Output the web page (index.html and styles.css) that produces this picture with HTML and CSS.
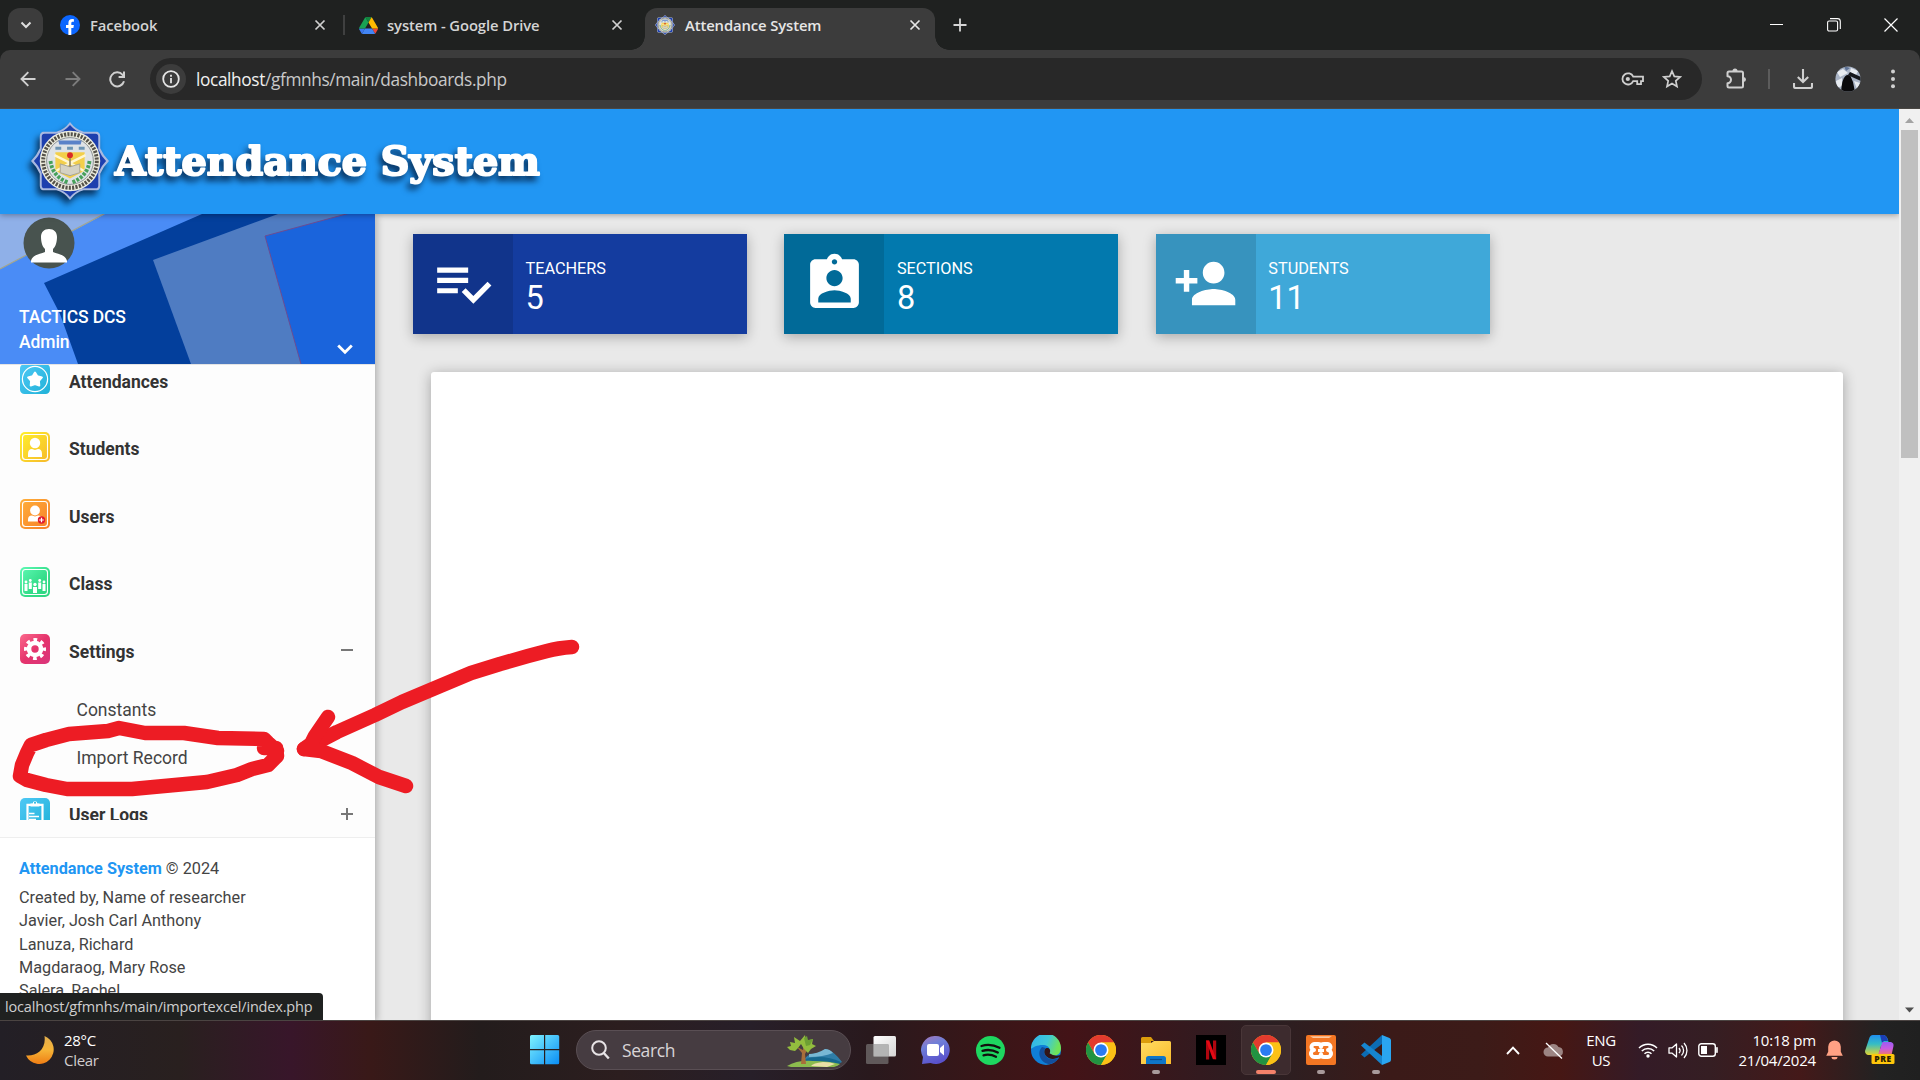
FILE: index.html
```html
<!DOCTYPE html>
<html lang="en">
<head>
<meta charset="utf-8">
<title>Attendance System</title>
<link rel="stylesheet" href="styles.css">
</head>
<body>
<svg class="defs" width="0" height="0" aria-hidden="true">
  <defs>
    <linearGradient id="win" x1="0" y1="0" x2="1" y2="1"><stop offset="0" stop-color="#7ff3ff"/><stop offset="1" stop-color="#0a8df5"/></linearGradient>
    <linearGradient id="moon" x1="0" y1="0" x2="0" y2="1"><stop offset="0" stop-color="#e2ae4e"/><stop offset=".5" stop-color="#f6b437"/><stop offset="1" stop-color="#ef7d14"/></linearGradient>
    <linearGradient id="blue" x1="0" y1="0" x2="1" y2="1"><stop offset="0" stop-color="#4fc8f5"/><stop offset="1" stop-color="#1fb2d8"/></linearGradient>
    <linearGradient id="yellow" x1="0" y1="0" x2="1" y2="1"><stop offset="0" stop-color="#fff02a"/><stop offset="1" stop-color="#f6b92c"/></linearGradient>
    <linearGradient id="orange" x1="0" y1="0" x2="1" y2="1"><stop offset="0" stop-color="#ffb03a"/><stop offset="1" stop-color="#f77f28"/></linearGradient>
    <linearGradient id="green" x1="0" y1="0" x2="1" y2="1"><stop offset="0" stop-color="#5ffab5"/><stop offset=".6" stop-color="#33dc88"/><stop offset="1" stop-color="#2fd580"/></linearGradient>
    <linearGradient id="pink" x1="0" y1="0" x2="1" y2="1"><stop offset="0" stop-color="#fb6a8c"/><stop offset=".5" stop-color="#e5346c"/><stop offset="1" stop-color="#d9357c"/></linearGradient>
    <linearGradient id="chat" x1="0" y1="0" x2=".4" y2="1"><stop offset="0" stop-color="#a877b8"/><stop offset=".4" stop-color="#6f7fd8"/><stop offset="1" stop-color="#5a52cc"/></linearGradient>
    <linearGradient id="edge1" x1="0" y1="0" x2="1" y2=".3"><stop offset="0" stop-color="#2fb4ec"/><stop offset=".6" stop-color="#3fc8d8"/><stop offset="1" stop-color="#6fe25a"/></linearGradient>
    <linearGradient id="folder" x1="0" y1="0" x2="1" y2="1"><stop offset="0" stop-color="#ffdc62"/><stop offset="1" stop-color="#fbbc2c"/></linearGradient>
    <linearGradient id="cop1" x1="0" y1="0" x2="0" y2="1"><stop offset="0" stop-color="#1f8ff0"/><stop offset=".45" stop-color="#35bdc4"/><stop offset="1" stop-color="#e2d42e"/></linearGradient>
    <linearGradient id="cop2" x1="0" y1="0" x2="0" y2="1"><stop offset="0" stop-color="#9a5cf4"/><stop offset=".5" stop-color="#c95be0"/><stop offset="1" stop-color="#f3786a"/></linearGradient>
    <linearGradient id="tv" x1="0" y1="0" x2="1" y2="1"><stop offset="0" stop-color="#ffffff"/><stop offset="1" stop-color="#d5d5d5"/></linearGradient>
  </defs>
  <symbol id="i-x" viewBox="0 0 12 12"><path d="M1.500 1.500l9 9M10.500 1.500l-9 9" fill="none" stroke="currentColor" stroke-width="1.700"/></symbol>
  <symbol id="i-chrome" viewBox="0 0 48 48">
    <circle cx="24" cy="24" r="24" fill="#fbc116"/>
    <path d="M3.200 12A24 24 0 0 1 44.800 12H24L13.600 30z" fill="#e33b2e"/>
    <path d="M3.200 12A24 24 0 0 0 24 48L34.400 30 24 24 13.600 30z" fill="#229342"/>
    <path d="M24 12h20.800A24 24 0 0 1 24 48l10.400-18z" fill="#fbc116"/>
    <circle cx="24" cy="24" r="12" fill="#fff"/><circle cx="24" cy="24" r="9.400" fill="#2a7bf2"/>
  </symbol>
  <symbol id="i-seal" viewBox="0 0 80 80">
    <path d="M40 0Q46 8 54 10H68Q71 11 71 15V27Q74 34 80 40 74 46 71 53V65Q71 69 68 70H54Q46 72 40 80 34 72 26 70H12Q9 69 9 65V53Q6 46 0 40 6 34 9 27V15Q9 11 12 10H26Q34 8 40 0z" fill="#a9b9e0"/>
    <path d="M40 3Q46 10 54 12H66Q69 12 69 15V28Q72 35 77 40 72 45 69 52V65Q69 68 66 68H54Q46 70 40 77 34 70 26 68H14Q11 68 11 65V52Q8 45 3 40 8 35 11 28V15Q11 12 14 12H26Q34 10 40 3z" fill="#1d3fae"/>
    <circle cx="40" cy="40" r="31" fill="#ededdf"/>
    <circle cx="40" cy="40" r="27.500" fill="none" stroke="#55524a" stroke-width="4" stroke-dasharray="2.200 1.300"/>
    <circle cx="40" cy="40" r="24" fill="#dfe3e6" stroke="#8c9194" stroke-width="1"/>
    <path d="M28 19h24l-1 4H29z" fill="#5b82c8"/>
    <path d="M25 31h30v19L40 58 25 50z" fill="#f3cf4a"/>
    <path d="M40 42L24 34M40 42l-14 8M40 42l16-8M40 42l14 8" stroke="#fff6cf" stroke-width="2.500"/>
    <path d="M25 27h6M37 27h6M49 27h6" stroke="#6d95b4" stroke-width="3"/>
    <path d="M20 40q2 16 18 22M60 40q-2 16-18 22" fill="none" stroke="#46a05a" stroke-width="4" stroke-dasharray="3 1.400"/>
    <path d="M30 43l10 3 10-3v9l-10 3-10-3z" fill="#d5d2c4" stroke="#a6a498" stroke-width="1"/>
    <path d="M39.200 36h1.600v10h-1.600z" fill="#8c8060"/><circle cx="40" cy="34" r="3" fill="#d92b26"/>
  </symbol>
</svg>

<div class="tabstrip">
  <div class="tab-search"><svg width="12" height="8" viewBox="0 0 12 8"><path d="M1.500 1.500L6 6l4.500-4.500" fill="none" stroke="#dedede" stroke-width="2"/></svg></div>
  <div class="tab tab-first">
    <svg class="fav" width="20" height="20" viewBox="0 0 20 20"><circle cx="10" cy="10" r="10" fill="#0b66ff"/><path d="M8.400 20v-7H6V10h2.400V8.200C8.400 5.300 9.800 4 12.200 4c.7 0 1.300.1 1.700.2v2.600h-1.200c-1 0-1.400.5-1.400 1.500V10h2.600l-.5 3h-2.100v7z" fill="#fff"/></svg>
    <span class="tab-title t-fb">Facebook</span>
    <svg class="tab-x" width="12" height="12"><use href="#i-x"/></svg>
  </div>
  <div class="tab tab-second">
    <svg class="fav" width="19" height="17" viewBox="0 0 87 78"><path d="M6.600 66.900l3.800 6.600c.8 1.400 2 2.500 3.300 3.300L27.500 53H0c0 1.500.4 3.100 1.200 4.500z" fill="#3b77f0"/><path d="M43.600 25L29.900 1.200c-1.300.8-2.500 1.900-3.300 3.300L1.200 48.500C.4 49.900 0 51.500 0 53h27.500z" fill="#18a253"/><path d="M73.500 76.800c1.300-.8 2.500-1.900 3.300-3.300l9.300-16c.8-1.400 1.200-3 1.200-4.500H59.800z" fill="#e8453a"/><path d="M43.600 25L57.400 1.200C56.100.4 54.500 0 52.900 0H34.400c-1.600 0-3.200.4-4.500 1.200z" fill="#12843f"/><path d="M59.800 53H27.500L13.700 76.800c1.300.8 2.900 1.200 4.500 1.200h50.800c1.600 0 3.200-.4 4.500-1.200z" fill="#4285f4"/><path d="M73.400 26.500L60.700 4.500c-.8-1.400-1.900-2.500-3.300-3.300L43.600 25l16.200 28h27.400c0-1.500-.4-3.100-1.200-4.500z" fill="#ffba00"/></svg>
    <span class="tab-title t-gd">system - Google Drive</span>
    <svg class="tab-x" width="12" height="12"><use href="#i-x"/></svg>
  </div>
  <div class="tab tab-active">
    <svg class="fav" width="20" height="20"><use href="#i-seal"/></svg>
    <span class="tab-title t-as">Attendance System</span>
    <svg class="tab-x" width="12" height="12"><use href="#i-x"/></svg>
  </div>
  <div class="newtab"><svg width="14" height="14" viewBox="0 0 14 14"><path d="M7 .5v13M.5 7h13" stroke="#d5d5d5" stroke-width="1.800"/></svg></div>
  <div class="winbtns">
    <svg width="14" height="14" viewBox="0 0 14 14"><path d="M0 6.500h13" stroke="#fff"/></svg>
    <svg width="14" height="14" viewBox="0 0 14 14"><rect x=".6" y="3" width="10" height="10" rx="1.500" fill="none" stroke="#fff" stroke-width="1.100"/><path d="M3 .6h7.500a2.800 2.800 0 0 1 2.800 2.800V11" fill="none" stroke="#fff" stroke-width="1.100"/></svg>
    <svg width="14" height="14" viewBox="0 0 14 14"><path d="M.5.5l13 13M13.500.5l-13 13" stroke="#fff" stroke-width="1.200"/></svg>
  </div>
</div>

<div class="toolbar-bg">
<div class="toolbar">
  <div class="tbtn"><svg width="16" height="16" viewBox="0 0 16 16"><path d="M15.500 8H1.800M8.300 1.200L1.500 8l6.800 6.800" fill="none" stroke="#d0d0d0" stroke-width="1.900"/></svg></div>
  <div class="tbtn"><svg width="16" height="16" viewBox="0 0 16 16"><path d="M.5 8h13.700M7.700 1.200L14.500 8l-6.800 6.800" fill="none" stroke="#7c7c7c" stroke-width="1.900"/></svg></div>
  <div class="tbtn"><svg width="17" height="17" viewBox="0 0 17 17"><path d="M15 10.300A7 7 0 1 1 13.600 3.800L15 5.400" fill="none" stroke="#d0d0d0" stroke-width="2"/><path d="M16 .6v6.400H9.600V5H14V.6z" fill="#d0d0d0"/></svg></div>
  <div class="omnibox">
    <div class="info"><svg width="18" height="18" viewBox="0 0 18 18"><circle cx="9" cy="9" r="7.800" fill="none" stroke="#e6e6e6" stroke-width="1.800"/><path d="M9 8v5.200M9 4.800v1.900" stroke="#e6e6e6" stroke-width="1.800"/></svg></div>
    <span class="url"><span class="host">localhost</span>/gfmnhs/main/dashboards.php</span>
    <svg class="key" width="23" height="14" viewBox="0 0 23 14"><path d="M12.200 4.700H22v4.400h-2v3h-3.800v-3h-4a5.600 5.600 0 1 1 0-4.400z" fill="none" stroke="#cfcfcf" stroke-width="1.800"/><circle cx="6.800" cy="7" r="2.100" fill="#cfcfcf"/></svg>
    <svg class="star" width="20" height="20" viewBox="0 0 20 20"><path d="M10 2.200l2.300 5.200 5.800.6-4.300 3.900 1.200 5.600-5-2.900-5 2.900 1.200-5.600L1.900 8l5.800-.6z" fill="none" stroke="#cfcfcf" stroke-width="1.700"/></svg>
  </div>
  <div class="tbtn ext"><svg width="22" height="22" viewBox="0 0 22 22"><path d="M4 3.500H16.500a1.500 1.500 0 0 1 1.500 1.500V18a1.500 1.500 0 0 1-1.500 1.500H4A1.500 1.500 0 0 1 2.500 18v-2.800a3.500 3.500 0 0 0 0-7V5A1.500 1.500 0 0 1 4 3.500z" fill="none" stroke="#cfcfcf" stroke-width="2" stroke-linejoin="round"/><path d="M7.500 3a2.500 2.500 0 0 1 5 0zM18.500 9a2.500 2.500 0 0 1 0 5z" fill="#cfcfcf"/></svg></div>
  <div class="tsep"></div>
  <div class="tbtn dl"><svg width="20" height="20" viewBox="0 0 20 20"><path d="M10 0v12.500M4.800 8l5.200 5 5.200-5M1 14v3.500a1.500 1.500 0 0 0 1.500 1.500h15a1.500 1.500 0 0 0 1.500-1.500V14" fill="none" stroke="#cfcfcf" stroke-width="2.100"/></svg></div>
  <div class="tbtn av"><svg width="26" height="26" viewBox="0 0 26 26"><defs><clipPath id="avc"><circle cx="13" cy="13" r="12.600"/></clipPath></defs><g clip-path="url(#avc)"><path d="M0 0h26v26H0z" fill="#a9b4c6"/><path d="M2 6l6-3 5 4-8 4zM16 2l7 3-2 4-6-3zM1 15l6-3v8l-5 2zM19 15l6 2-3 6z" fill="#e8ecf1"/><path d="M9 0l6 2-4 3z" fill="#5f7396"/><path d="M6 26q1-13 4-15.500 2.500-2.500 5.500-.5L18 16l2 10z" fill="#0a0a0c"/><path d="M13 9l2-3 11 5v4l-9-4z" fill="#15171c"/></g></svg></div>
  <div class="tbtn dots"><svg width="6" height="20" viewBox="0 0 6 20"><g fill="#d0d0d0"><circle cx="3" cy="2.500" r="2"/><circle cx="3" cy="9.900" r="2"/><circle cx="3" cy="17.300" r="2"/></g></svg></div>
</div>
</div>

<div class="viewport">
  <div class="page">
    <header class="navbar">
      <svg width="550" height="105" viewBox="0 0 550 105"><g class="brand-shadow"><use href="#i-seal" x="31" y="13" width="78" height="78"/><text class="brand-text" x="115" y="65.500" textLength="425" lengthAdjust="spacingAndGlyphs">Attendance System</text></g></svg>
    </header>
    <div class="content">
      <aside class="sidebar">
        <div class="profile">
          <svg class="profile-bg" width="375" height="150" viewBox="0 0 375 150">
            <path d="M0 0h375v150H0z" fill="#4a8cf6"/>
            <path d="M0 0H105L0 55z" fill="#8fb0e8"/><path d="M104 0L0 55" stroke="#a3a68f" stroke-width="1.200"/>
            <path d="M202 0L44 69 60 100 78 150H375V0z" fill="#033f9c"/>
            <path d="M278 0L153 46 191 150H375V0z" fill="#4f7cc2"/>
            <path d="M350-1L265 22 301 150H375V-2z" fill="#1a64dc"/><path d="M350-1L265 22l36 128" fill="none" stroke="#6c4c92" stroke-width="1"/>
            <circle cx="49" cy="29" r="25.500" fill="#48534f"/>
            <path d="M49 15c5 0 8 3 8 8 0 5-1.500 10-4 12v3c5 2 13 3 14 9v1.500H31V47c1-6 9-7 14-9v-3c-2.500-2-4-7-4-12 0-5 3-8 8-8z" fill="#fff"/>
          </svg>
          <div class="profile-text"><span>TACTICS DCS</span><span>Admin</span></div>
          <svg class="profile-caret" width="16" height="11" viewBox="0 0 16 11"><path d="M1.200 1.500L8 8.200l6.800-6.700" fill="none" stroke="#fff" stroke-width="2.800"/></svg>
        </div>
        <nav class="menu">
          <div class="item first"><svg width="30" height="30" viewBox="0 0 30 30"><rect width="30" height="30" rx="4.500" fill="url(#blue)"/><circle cx="15" cy="15" r="12.600" fill="none" stroke="#fff" stroke-width="1.200"/><path d="M15 8.500l2.300 3.800 4.600 1.100-3 3.500.4 4.600-4.300-1.500-4.300 1.500.4-4.600-3-3.500 4.600-1.100z" fill="#fff" stroke="#fff" stroke-width="2" stroke-linejoin="round"/></svg><span class="m-att">Attendances</span></div>
          <div class="item"><svg width="30" height="30" viewBox="0 0 30 30"><rect width="30" height="30" rx="5" fill="url(#yellow)"/><rect x="2.500" y="2.500" width="25" height="25" rx="3" fill="none" stroke="#fff" stroke-width="1.100"/><circle cx="15" cy="11" r="5.200" fill="#fff"/><path d="M8 25v-3q0-5 4-5l3 1 3-1q4 0 4 5v3z" fill="#fff"/></svg><span>Students</span></div>
          <div class="item"><svg width="30" height="30" viewBox="0 0 30 30"><rect width="30" height="30" rx="5" fill="url(#orange)"/><rect x="2.500" y="2.500" width="25" height="25" rx="3" fill="none" stroke="#fff" stroke-width="1.100"/><circle cx="15" cy="11.500" r="4.900" fill="#fff"/><path d="M8 22.500v-2q0-4 4-4l3 1 3-1q4 0 4 4v2z" fill="#fff"/><circle cx="21.500" cy="21" r="3.700" fill="#e01a2c"/><path d="M21.500 18.700v4.600M19.200 21h4.600" stroke="#fff" stroke-width="1.200"/></svg><span>Users</span></div>
          <div class="item"><svg width="30" height="30" viewBox="0 0 30 30"><rect width="30" height="30" rx="5" fill="url(#green)"/><rect x="2.500" y="2.500" width="25" height="25" rx="3" fill="none" stroke="#fff" stroke-width="1.100"/><g fill="#fff"><circle cx="6" cy="15" r="1.400"/><circle cx="10.300" cy="13.500" r="1.400"/><circle cx="15" cy="17.500" r="1.700"/><circle cx="19.700" cy="13.500" r="1.400"/><circle cx="24" cy="15" r="1.400"/><path d="M4.500 17h3v7h-3zM8.800 15.500h3V22h-3zM13 20h4v6h-4zM18.200 15.500h3V22h-3zM22.500 17h3v7h-3z"/></g></svg><span>Class</span></div>
          <div class="item"><svg width="30" height="30" viewBox="0 0 30 30"><rect width="30" height="30" rx="5" fill="url(#pink)"/><circle cx="15" cy="15" r="6" fill="none" stroke="#fff" stroke-width="4.600"/><circle cx="15" cy="15" r="9" fill="none" stroke="#fff" stroke-width="4" stroke-dasharray="3.600 3.470" stroke-dashoffset="1.800"/></svg><span>Settings</span><i class="toggle minus"></i></div>
          <div class="sub">Constants</div>
          <div class="sub">Import Record</div>
          <div class="item"><svg width="30" height="30" viewBox="0 0 30 30"><rect width="30" height="30" rx="5" fill="url(#blue)"/><path d="M7.500 6.800h15V30h-15z" fill="none" stroke="#fff" stroke-width="2.200"/><path d="M10.500 5.500h2.200a2.300 2.300 0 0 1 4.600 0h2.200v3h-9z" fill="#fff"/><circle cx="15" cy="4.800" r="1" fill="#24b5de"/><path d="M9 15.500h5.500M9 18.500h10M9 21.500h7" stroke="#fff" stroke-width="1.600"/></svg><span>User Logs</span><i class="toggle plus"></i></div>
        </nav>
        <div class="legal">
          <p class="copy"><b>Attendance System</b> © 2024</p>
          <p class="l1">Created by, Name of researcher</p>
          <p>Javier, Josh Carl Anthony</p>
          <p>Lanuza, Richard</p>
          <p>Magdaraog, Mary Rose</p>
          <p>Salera, Rachel</p>
        </div>
      </aside>
      <main class="main">
        <div class="cards">
          <div class="card c1"><div class="cicon"><svg width="62" height="62" viewBox="0 0 24 24" fill="#fff"><path d="M14 10H2v2h12v-2zm0-4H2v2h12V6zM2 16h8v-2H2v2zm19.500-4.500L23 13l-6.990 7-4.510-4.500L13 14l3.010 3 5.490-5.500z"/></svg></div><div class="ctext"><span>TEACHERS</span><b>5</b></div></div>
          <div class="card c2"><div class="cicon"><svg width="65" height="65" viewBox="0 0 24 24" fill="#fff"><path d="M19 3h-4.180C14.400 1.840 13.300 1 12 1c-1.300 0-2.400.84-2.820 2H5c-1.100 0-2 .9-2 2v14c0 1.100.9 2 2 2h14c1.100 0 2-.9 2-2V5c0-1.100-.9-2-2-2zm-7 0c.55 0 1 .45 1 1s-.45 1-1 1-1-.45-1-1 .45-1 1-1zm0 4c1.660 0 3 1.340 3 3s-1.340 3-3 3-3-1.340-3-3 1.340-3 3-3zm6 12H6v-1.400c0-2 4-3.100 6-3.100s6 1.100 6 3.100V19z"/></svg></div><div class="ctext"><span>SECTIONS</span><b>8</b></div></div>
          <div class="card c3"><div class="cicon"><svg width="65" height="65" viewBox="0 0 24 24" fill="#fff"><path d="M15 12c2.210 0 4-1.790 4-4s-1.790-4-4-4-4 1.790-4 4 1.790 4 4 4zm-9-2V7H4v3H1v2h3v3h2v-3h3v-2H6zm9 4c-2.670 0-8 1.340-8 4v2h16v-2c0-2.660-5.330-4-8-4z"/></svg></div><div class="ctext"><span>STUDENTS</span><b>11</b></div></div>
        </div>
        <div class="panel"></div>
      </main>
    </div>
    <div class="status">localhost/gfmnhs/main/importexcel/index.php</div>
  </div>
  <div class="scroll">
    <svg width="21" height="21" viewBox="0 0 21 21"><path d="M6 14l4.500-5 4.500 5z" fill="#a3a3a3"/></svg>
    <div class="thumb"></div>
    <svg class="down" width="21" height="21" viewBox="0 0 21 21"><path d="M6 8.500l4.500 5 4.500-5z" fill="#505050"/></svg>
  </div>
</div>

<footer class="taskbar">
  <div class="weather">
    <svg width="28" height="28" viewBox="0 0 28 28"><path d="M18.500 0A14.500 14.500 0 1 1 0 19.500C10 20.500 20.500 14 18.500 0z" fill="url(#moon)"/></svg>
    <div class="wtext"><span>28°C</span><span class="dim">Clear</span></div>
  </div>
  <svg class="start" width="30" height="30" viewBox="0 0 30 30"><path d="M1.500 0H14v14H0V1.500A1.500 1.500 0 0 1 1.500 0zM15.200 0h12.500A1.500 1.500 0 0 1 29.200 1.500V14h-14zM0 15.200h14v14H1.500A1.500 1.500 0 0 1 0 27.700zM15.200 15.200h14v12.500a1.500 1.500 0 0 1-1.500 1.500H15.200z" fill="url(#win)"/></svg>
  <div class="search">
    <svg class="mag" width="19" height="20" viewBox="0 0 19 20"><circle cx="8" cy="8" r="6.800" fill="none" stroke="#e8e4e6" stroke-width="2"/><path d="M12.800 13l5 5.500" stroke="#e8e4e6" stroke-width="2.400"/></svg>
    <span>Search</span>
    <svg class="tree" width="56" height="32" viewBox="0 0 56 32"><path d="M17 26C22 14 32 22 38 14q8 1 17 13l-6 3z" fill="#2f7ea8"/><path d="M22 19q8 0 16-5 5 0 8 4-10 4-24 4z" fill="#78b8d4"/><path d="M18 24q18-5 36 3l-4 4H18z" fill="#16688f"/><path d="M0 31q10-6 26-5 16 0 27 3-2 2-6 3H4z" fill="#8cbb4e"/><path d="M24 31q2-3 12-4 8 0 12 2l-8 3z" fill="#e9dfa6"/><path d="M14 29l1-11-5-6 6 3 1-8 1 8 5-5-5 9 1 10z" fill="#a86e3a"/><path d="M0 12l4-1-1-4 5 1-1-6 6 4 5-6 1 6 7-2-1 5 4 2-5 3-3 4-4-4-3-5-3 4-3 3-5-1z" fill="#93bd3e"/><path d="M17 3l3-2 1 4 5-1-3 6-4 1z" fill="#6d9f33"/></svg>
  </div>
  <div class="apps">
    <div class="app"><svg width="30" height="28" viewBox="0 0 30 28"><rect x="7.500" width="22.500" height="20.500" rx="1.500" fill="url(#tv)"/><rect y="8" width="22.500" height="20" rx="1.500" fill="#6c6868" fill-opacity=".82"/><path d="M7.500 8h15v12.500h-15z" fill="#b4b4b4"/></svg></div>
    <div class="app"><svg width="29" height="28" viewBox="0 0 29 28"><path d="M14.500 0a14 14 0 1 1-5 27L1 28l1-7A14 14 0 0 1 14.500 0z" fill="url(#chat)"/><rect x="6" y="8" width="12" height="12" rx="2" fill="#fff"/><path d="M19 12l4-3.500v11L19 16z" fill="#fff"/></svg></div>
    <div class="app"><svg width="29" height="29" viewBox="0 0 29 29"><circle cx="14.500" cy="14.500" r="14.500" fill="#1ed760"/><path d="M5.500 10q9-2.800 18 1.800M6.500 14.800q8-2.200 15.300 1.700M7.500 19.300q6.500-1.700 12.500 1.500" fill="none" stroke="#120f0e" stroke-width="2.300" stroke-linecap="round"/></svg></div>
    <div class="app"><svg width="30" height="30" viewBox="0 0 30 30"><circle cx="15" cy="15" r="15" fill="#0f7fd8"/><path d="M0 14A15 15 0 0 1 30 13c0 5-3 7.500-7 7.500-3.500 0-5-1-4.500-2.200C20 15 18 10.500 13 10 7 9.500 2 12 0 14z" fill="url(#edge1)"/><path d="M11 12c-6 6-1 17 8 17q5-1 9-6-11 4-14.500-4c-.8-2-.5-4 1-6z" fill="#124f9e"/><path d="M18.500 18.300c1.700-3 0-6-3-5.300-2.500 1-3 5-.5 8 4 4 9 3.500 14.500.5V20q-6 2-11-1.700z" fill="#331518"/></svg></div>
    <div class="app"><svg width="30" height="30"><use href="#i-chrome"/></svg></div>
    <div class="app run"><svg width="30" height="27" viewBox="0 0 30 27"><path d="M0 1.500A1.500 1.500 0 0 1 1.500 0H10l3 4h-3v6H0z" fill="#dc9d0c"/><path d="M0 6h10l3-2h15.500A1.500 1.500 0 0 1 30 5.500V27H0z" fill="url(#folder)"/><path d="M5 27v-5.500A2.500 2.500 0 0 1 7.500 19h15a2.500 2.500 0 0 1 2.500 2.500V27z" fill="#0f76c8"/><path d="M9 22.500h12" stroke="#0a4d8c" stroke-width="1.200"/></svg></div>
    <div class="app"><svg width="30" height="30" viewBox="0 0 30 30"><path d="M0 0h30v30H0z"/><path d="M10 5.500h3.200v19H10zM17 5.500h3.200v18.800H17z" fill="#b0060f"/><path d="M10 5.500h3.200l7 18.700-3.400-.2z" fill="#e50914"/></svg></div>
    <div class="app active"><svg width="30" height="30"><use href="#i-chrome"/></svg></div>
    <div class="app run"><svg width="30" height="30" viewBox="0 0 30 30"><rect width="30" height="30" rx="2" fill="#f37623"/><path d="M4 1.200h22l-3 1.800H7z" fill="#fbc8a0"/><path d="M9 9h3q3 0 3 3 0-3 3-3h3a3 3 0 0 1 1 6 3.500 3.500 0 0 1-1 7h-3q-3 0-3-3 0 3-3 3H9a3.500 3.500 0 0 1-1-7 3 3 0 0 1 1-6z" fill="none" stroke="#fff" stroke-width="4" stroke-linejoin="round"/><path d="M12 15.500h6" stroke="#fff" stroke-width="3"/></svg></div>
    <div class="app run"><svg width="30" height="30" viewBox="0 0 30 30"><path d="M0 19.500L21 0v9L3.500 22.500z" fill="#0c6cb4"/><path d="M0 10.500L21 30v-9L3.500 7.500z" fill="#1685cf"/><path d="M21 0l7.500 3A2.500 2.500 0 0 1 30 5.300v19.400a2.500 2.500 0 0 1-1.500 2.300L21 30z" fill="#2aa5f0"/></svg></div>
  </div>
  <div class="tray">
    <svg class="t-chev" width="14" height="9" viewBox="0 0 14 9"><path d="M1 8l6-6.300L13 8" fill="none" stroke="#fff" stroke-width="1.900"/></svg>
    <svg class="t-cloud" width="21" height="17" viewBox="0 0 21 17"><path d="M5 14.500a4.500 4.500 0 0 1 0-9A5.800 5.800 0 0 1 15.500 5a4.800 4.800 0 0 1 .5 9.500z" fill="#9c8583"/><path d="M3 1l16 15.500" stroke="#fff" stroke-width="1.300"/></svg>
    <div class="t-lang"><span>ENG</span><span>US</span></div>
    <svg class="t-wifi" width="20" height="16" viewBox="0 0 20 16"><path d="M1 6a12.700 12.700 0 0 1 18 0M3.800 9a8.800 8.800 0 0 1 12.400 0M6.500 11.800a5 5 0 0 1 7 0" fill="none" stroke="#fff" stroke-width="1.500"/><circle cx="10" cy="14" r="1.700" fill="#fff"/></svg>
    <svg class="t-snd" width="20" height="17" viewBox="0 0 20 17"><path d="M1 5.800h3.200L8.500 2v13L4.200 11.200H1z" fill="none" stroke="#fff" stroke-width="1.300" stroke-linejoin="round"/><path d="M11 6a4 4 0 0 1 0 5.200M13.500 3.500a7 7 0 0 1 0 10M16 1a11 11 0 0 1 0 15" fill="none" stroke="#fff" stroke-width="1.300"/></svg>
    <svg class="t-bat" width="20" height="14" viewBox="0 0 20 14"><rect x=".8" y=".8" width="16.500" height="12.400" rx="2.500" fill="none" stroke="#fff" stroke-width="1.400"/><path d="M3 3h6v8H3z" fill="#fff"/><path d="M18.300 4.500h1.200v5h-1.200z" fill="#fff" stroke="#fff" stroke-width=".6"/></svg>
    <div class="t-time"><span class="tm">10:18 pm</span><span class="dt">21/04/2024</span></div>
    <svg class="t-bell" width="17" height="20" viewBox="0 0 17 20"><path d="M8.500.5a6.300 6.300 0 0 1 6.300 6.300v5l2 4H.2l2-4v-5A6.300 6.300 0 0 1 8.500.5zM5.500 17h6a3 2.500 0 0 1-6 0z" fill="#ffa184"/></svg>
    <svg class="t-cop" width="30" height="30" viewBox="0 0 30 30"><path d="M8 0h11q3 1 4 5l1 4-6 1-2 1-2.500 9H3q-3-1-3-4L4 4q1-4 4-4z" fill="url(#cop1)"/><path d="M15 0h4q3 1 4 6h-4l-2 2z" fill="#1b3fb6"/><path d="M17.500 7H26q3 1 2.500 4l-2 9H13z" fill="url(#cop2)"/><rect x="6.500" y="19" width="23" height="10" rx="1.500" fill="#ffc60b"/><text class="pre" x="18" y="27" text-anchor="middle">PRE</text></svg>
  </div>
</footer>

<svg class="markup" width="620" height="200" viewBox="0 620 620 200">
  <g fill="none" stroke="#ed1c24" stroke-width="14.500" stroke-linecap="round" stroke-linejoin="round">
    <path d="M572 647Q558 648 547 651L528 656 500 664 471 673 440 686 402 702 375 715 337 732 312 745 304 749"/>
    <path d="M328 717L315 736 311 744 304 749 321 751 352 763 379 777 406 786"/>
    <path d="M264 748L276 748 277 756 268 765 252 769 237 775 207 782 175 785 132 789H67L46 785 27 780 20 776 22 765 27 753 31 745 46 740 69 734 108 731 119 728 145 733H184L218 738 264 739 268 743 277 751"/>
  </g>
</svg>
</body>
</html>
```
FILE: styles.css
```css
* { box-sizing: border-box; }
body { margin: 0; width: 1920px; height: 1080px; overflow: hidden; display: flex; flex-direction: column; background: #1f2020; font-family: "Open Sans", "Noto Sans", sans-serif; position: relative; }
svg { display: block; flex: none; }
p { margin: 0; }
.defs { position: absolute; }

.tabstrip { height: 50px; flex: none; display: flex; align-items: center; background: #1f2120; padding-left: 8px; }
.tab-search { width: 35px; height: 34px; border-radius: 12px; background: #3c3c3c; display: flex; align-items: center; justify-content: center; }
.tab { display: flex; align-items: center; height: 42px; margin-top: 8px; padding-bottom: 8px; font-size: 14.800px; color: #d4d4d4; font-weight: 550; letter-spacing: -.1px; white-space: nowrap; }
.tab-title { margin-left: 10px; flex: 1; }
.tab-x { color: #d0d0d0; }
.tab-first { width: 285px; margin-left: 17px; padding-right: 19px; position: relative; }
.tab-first::after { content: ""; position: absolute; right: 0; top: 7px; width: 2px; height: 20px; background: #3f4040; }
.tab-second { width: 300px; padding-left: 14px; padding-right: 22px; }
.tab-second .tab-title { margin-left: 9px; }
.tab-active { width: 290px; padding-left: 10px; padding-right: 14px; background: #3c3c3c; border-radius: 12px 12px 0 0; color: #e6e6e6; position: relative; }
.tab-active::before, .tab-active::after { content: ""; position: absolute; bottom: 0; width: 14px; height: 14px; }
.tab-active::before { left: -14px; background: radial-gradient(circle at 0 0, transparent 13.500px, #3c3c3c 14px); }
.tab-active::after { right: -14px; background: radial-gradient(circle at 100% 0, transparent 13.500px, #3c3c3c 14px); }
.tab-active .tab-x { color: #e6e6e6; }
.newtab { margin-left: 18px; }
.winbtns { margin-left: auto; display: flex; gap: 43px; padding-right: 22px; }

.toolbar-bg { flex: none; background: #1f2120; }
.toolbar { height: 59px; background: #3c3c3c; border-radius: 10px 10px 0 0; display: flex; align-items: center; padding-left: 5px; border-bottom: 1px solid #4a4743; }
.tbtn { width: 45px; display: flex; justify-content: center; }
.omnibox { margin-left: 10px; width: 1552px; height: 42px; border-radius: 21px; background: #282828; display: flex; align-items: center; padding: 0 20px 0 6px; }
.info { width: 30px; height: 30px; border-radius: 50%; background: #3c3c3c; display: flex; align-items: center; justify-content: center; }
.url { margin-left: 10px; font-size: 17.300px; color: #c9c9c9; flex: 1; letter-spacing: -.38px; }
.host { color: #f0f0f0; }
.key { margin-right: 18px; }
.ext { margin-left: 11px; }
.tsep { width: 2px; height: 20px; background: #5c5c5c; margin: 0 10px; }

.viewport { height: 911px; flex: none; display: flex; background: #e9e9e9; }
.page { width: 1899px; height: 911px; position: relative; display: flex; flex-direction: column; overflow: hidden; font-family: Roboto, sans-serif; }
.navbar { height: 105px; flex: none; background: #2196f3; box-shadow: 0 1px 6px rgba(0,0,0,.35); position: relative; z-index: 3; }
.brand-shadow { filter: drop-shadow(-3px 5px 3px rgba(0,20,50,.75)); }
.brand-text { font-family: "DejaVu Serif", serif; font-weight: 700; font-size: 40px; fill: #fff; stroke: #fff; stroke-width: 2.200px; stroke-linejoin: round; }
.content { flex: 1; display: flex; min-height: 0; }
.sidebar { width: 375px; flex: none; background: #fdfdfd; display: flex; flex-direction: column; box-shadow: 2px 2px 7px rgba(0,0,0,.25); position: relative; z-index: 2; overflow: hidden; height: 806px; }
.profile { height: 150px; flex: none; position: relative; display: flex; align-items: flex-end; justify-content: space-between; padding: 0 22px 9px 19px; }
.profile-bg { position: absolute; left: 0; top: 0; }
.profile-text { position: relative; display: flex; flex-direction: column; font-size: 17.500px; line-height: 25px; font-weight: 500; color: #fff; letter-spacing: -.1px; }
.profile-caret { position: relative; }
.menu { height: 456px; flex: none; overflow: hidden; border-top: 1px solid #e4e4e4; }
.item { height: 67.500px; display: flex; align-items: center; padding: 0 22px 0 20px; font-size: 17.500px; font-weight: 700; color: #333; }
.item span { margin-left: 19px; flex: 1; padding-top: 5px; }
.first { margin-top: -19.500px; }
.sub { height: 48px; line-height: 54px; padding-left: 76.500px; font-size: 17.500px; color: #444; }
.toggle { width: 12px; height: 12px; margin-top: 2px; background: linear-gradient(#777,#777) center/12px 2px no-repeat; }
.plus { background: linear-gradient(#777,#777) center/12px 2px no-repeat, linear-gradient(#777,#777) center/2px 12px no-repeat; }
.legal { flex: 1; margin-top: 17px; border-top: 1px solid #eee; background: #fff; padding: 19px 19px 0; font-size: 16.250px; line-height: 23.200px; color: #444; white-space: nowrap; }
.copy { margin-bottom: 6px; }
.copy b { color: #2196f3; }
.main { flex: 1; padding: 20px 56px 0 38px; display: flex; flex-direction: column; }
.cards { display: flex; gap: 37.400px; }
.card { width: 334px; height: 100px; display: flex; color: #fff; box-shadow: 0 3px 12px rgba(0,0,0,.28); }
.cicon { width: 100px; display: flex; align-items: center; justify-content: center; background: rgba(0,0,0,.12); padding-bottom: 2px; }
.c1 { background: #143c9f; }
.c2 { background: #0279ae; }
.c3 { background: #3fa8d9; }
.ctext { padding: 21px 0 0 12.500px; display: flex; flex-direction: column; font-size: 16.250px; }
.ctext span { line-height: 28px; }
.ctext b { font-weight: 400; font-size: 32.500px; line-height: 31px; }
.panel { flex: 1; margin: 38px 0 -20px 18px; background: #fff; border-radius: 3px; box-shadow: 0 2px 14px rgba(0,0,0,.3); }
.status { position: absolute; left: 0; bottom: 0; z-index: 5; width: 323px; height: 27px; background: #1f2120; color: #cfcfcf; border-radius: 0 4px 0 0; font: 14.500px/27px "Open Sans", "Noto Sans", sans-serif; letter-spacing: -.17px; padding-left: 5px; white-space: nowrap; }
.scroll { width: 21px; background: #f0f0f0; display: flex; flex-direction: column; align-items: center; }
.thumb { width: 17px; height: 328px; background: #c0c0c0; }
.down { margin-top: auto; }

.taskbar { height: 60px; flex: none; display: flex; align-items: center; border-top: 1px solid #4b4442; padding-bottom: 1px; color: #fff; font-size: 15px; background: linear-gradient(90deg, #231f26 0, #29201f 180px, #38162a 290px, #391918 370px, #231c1c 480px, #2c1e1f 620px, #271f29 750px, #29191d 870px, #3a1618 990px, #431317 1070px, #331a1f 1200px, #2b1f22 1270px, #3b1a18 1390px, #3c1b18 1480px, #461714 1560px, #341b27 1640px, #351e23 1710px, #441919 1800px, #222222 1880px, #202020 1920px); }
.weather { display: flex; align-items: center; margin-left: 26px; width: 504px; gap: 10px; }
.wtext { display: flex; flex-direction: column; line-height: 20px; letter-spacing: -.3px; }
.dim { color: #d0cccd; }
.search { margin-left: 16px; width: 275px; height: 40px; border-radius: 20px; background: #463c41; border: 1px solid #5a4f54; display: flex; align-items: center; padding: 0 6px 0 14px; font-size: 17.500px; color: #d9d5d7; }
.search span { margin-left: 12px; flex: 1; letter-spacing: -.4px; }
.tree { margin-top: 2px; margin-right: 1px; }
.apps { display: flex; gap: 5px; margin-left: 4.500px; }
.app { width: 50px; height: 50px; display: flex; align-items: center; justify-content: center; position: relative; border-radius: 5px; }
.run::after, .active::after { content: ""; position: absolute; bottom: 1px; left: 21px; width: 8px; height: 4px; border-radius: 2px; background: #a89a9b; }
.active { background: #3d2b2e; border: 1px solid #493638; }
.active::after { left: 14px; bottom: 0; width: 20px; background: #f4826a; }
.tray { margin-left: auto; display: flex; align-items: center; }
.t-cloud { margin-left: 23px; }
.t-lang { display: flex; flex-direction: column; align-items: center; line-height: 20px; width: 40px; margin-left: 17px; letter-spacing: -.3px; }
.t-wifi { margin-left: 17px; }
.t-snd { margin-left: 10px; }
.t-bat { margin-left: 10px; }
.t-time { display: flex; flex-direction: column; align-items: flex-end; line-height: 20px; width: 90px; margin-left: 8px; letter-spacing: -.2px; }
.t-bell { margin-left: 10px; }
.t-cop { margin: 0 25px 0 22px; }
.pre { font: 800 8.500px "Open Sans", sans-serif; fill: #2a2000; letter-spacing: .5px; }
.markup { position: absolute; left: 0; top: 620px; z-index: 20; }
```
